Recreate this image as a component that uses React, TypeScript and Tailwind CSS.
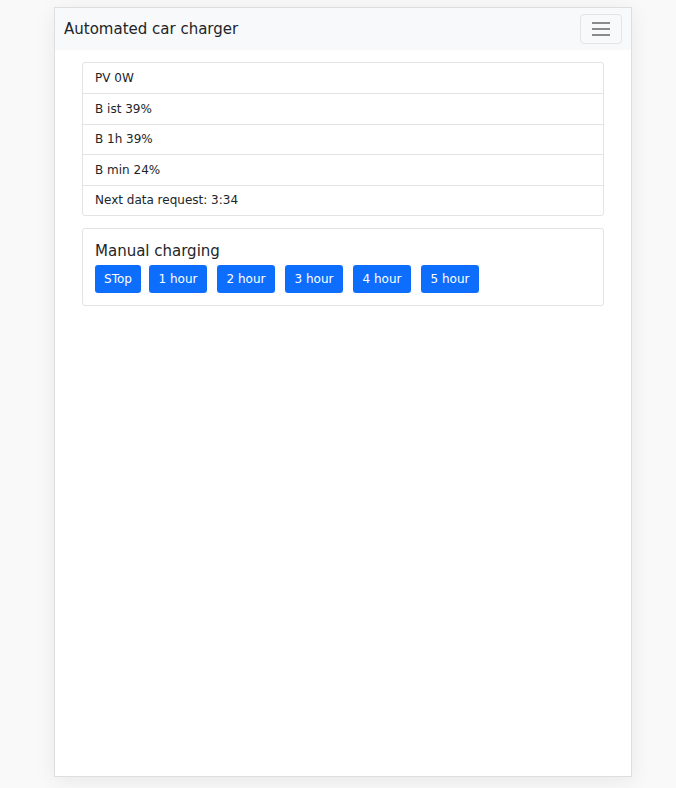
import React from 'react';

const stats = ['PV 0W', 'B ist 39%', 'B 1h 39%', 'B min 24%', 'Next data request: 3:34'];
const hours = ['1 hour', '2 hour', '3 hour', '4 hour', '5 hour'];

export default function App() {
  return (
    <div className="min-h-[788px] bg-[#f9f9f9] pt-[7px] font-['DejaVu_Sans',sans-serif] text-[#212529]">
      <div className="ml-[54px] h-[770px] w-[578px] border border-[#dedede] bg-white shadow-[0_4px_20px_rgba(0,0,0,0.07)]">
        <nav className="flex h-[42px] items-center justify-between bg-[#f8f9fa] pl-[9px] pr-[9px]">
          <span className="text-[15px]">Automated car charger</span>
          <button className="flex h-[30px] w-[42px] flex-col items-center justify-center gap-[4px] rounded-[4px] border border-[#e3e4e5]">
            <span className="h-[2px] w-[18px] bg-[#8a8b8c]" />
            <span className="h-[2px] w-[18px] bg-[#8a8b8c]" />
            <span className="h-[2px] w-[18px] bg-[#8a8b8c]" />
          </button>
        </nav>

        <div className="px-[27px] pt-[12px]">
          <ul className="rounded-[3px] border border-[#e2e3e4]">
            {stats.map((s, i) => (
              <li
                key={s}
                className={`flex h-[30.4px] items-center px-[12px] text-[12px] ${i > 0 ? 'border-t border-[#e2e3e4]' : ''}`}
              >
                {s}
              </li>
            ))}
          </ul>

          <div className="mt-[12px] rounded-[3px] border border-[#e2e3e4] px-[12px] pb-[12px] pt-[12px]">
            <h5 className="text-[15px] leading-[20px]">Manual charging</h5>
            <div className="mt-[4px] flex">
              <button className="mr-[8px] h-[28px] w-[46px] rounded-[3px] bg-[#0d6efd] text-[12px] text-white">
                STop
              </button>
              {hours.map((h, i) => (
                <button
                  key={h}
                  className={`h-[28px] w-[58px] rounded-[3px] bg-[#0d6efd] text-[12px] text-white ${i > 0 ? 'ml-[10px]' : ''}`}
                >
                  {h}
                </button>
              ))}
            </div>
          </div>
        </div>
      </div>
    </div>
  );
}
